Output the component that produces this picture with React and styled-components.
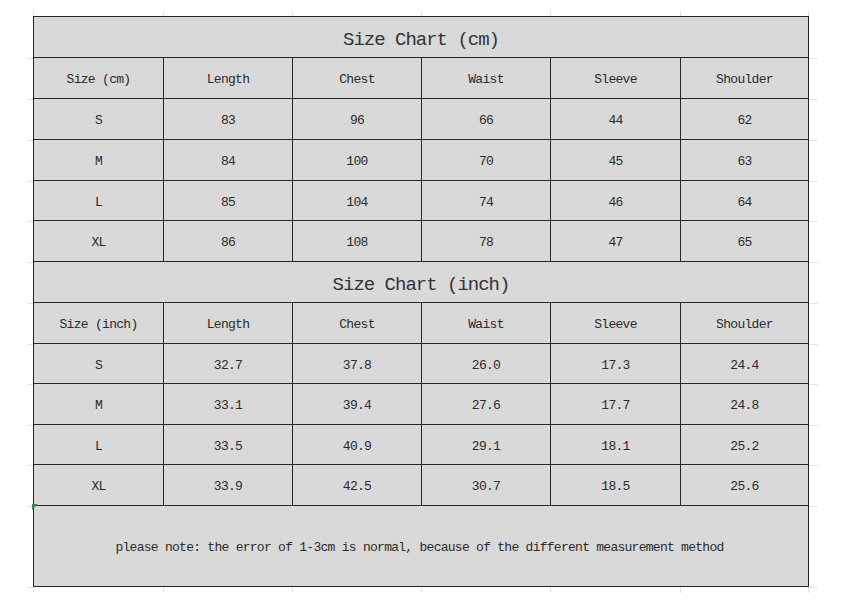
import React from "react";
import styled, { createGlobalStyle } from "styled-components";

const GlobalStyle = createGlobalStyle`
  html, body { margin: 0; padding: 0; background: #ffffff; }
  body { font-family: "Liberation Mono", "Courier New", monospace; }
`;

const COLS = "130px 129px 129px 129px 130px 128px";
const GRID_FAINT = "#e3e3e3";
const LINE = "#262626";

const Page = styled.div`
  width: 844px;
  height: 600px;
  box-sizing: border-box;
  padding: 11px 0 0 33px;
`;

const TickRow = styled.div`
  display: grid;
  grid-template-columns: ${COLS};
  width: 776px;
  height: ${(p) => p.$h}px;
  box-sizing: border-box;
  border-left: 1px solid ${GRID_FAINT};
`;

const Tick = styled.div`
  border-right: 1px solid ${GRID_FAINT};
`;

const Sheet = styled.div`
  width: 776px;
  box-sizing: border-box;
  border-left: 1px solid ${LINE};
  border-top: 1px solid ${LINE};
  background: #d9d9d9;
`;

const Row = styled.div`
  position: relative;
  display: grid;
  grid-template-columns: ${COLS};
  height: ${(p) => p.$h}px;

  &::before,
  &::after {
    content: "";
    position: absolute;
    bottom: -1px;
    height: 1px;
    background: ${GRID_FAINT};
  }
  &::before {
    left: -7px;
    width: 6px;
  }
  &::after {
    right: -9px;
    width: 9px;
  }
`;

const Cell = styled.div`
  position: relative;
  box-sizing: border-box;
  display: flex;
  align-items: center;
  justify-content: center;
  padding-top: 3px;
  border-right: 1px solid ${LINE};
  border-bottom: 1px solid ${LINE};
  color: #2b2b2b;
  font-size: 13px;
  letter-spacing: -0.7px;
  white-space: pre;
  grid-column: ${(p) => (p.$span ? `1 / span ${p.$span}` : "auto")};
`;

const TitleCell = styled(Cell)`
  font-size: 19px;
  letter-spacing: -1px;
  color: #333;
  padding-top: 5px;
`;

const NoteCell = styled(Cell)`
  padding-top: 2px;
  padding-right: 3px;
  letter-spacing: -0.73px;

  &::before {
    content: "";
    position: absolute;
    left: -2px;
    top: -2px;
    width: 0;
    height: 0;
    border-top: 6px solid #2f8f3c;
    border-right: 6px solid transparent;
  }
`;

const headers = ["Length", "Chest", "Waist", "Sleeve", "Shoulder"];

const cmRows = [
  ["S", "83", "96", "66", "44", "62"],
  ["M", "84", "100", "70", "45", "63"],
  ["L", "85", "104", "74", "46", "64"],
  ["XL", "86", "108", "78", "47", "65"],
];

const inchRows = [
  ["S", "32.7", "37.8", "26.0", "17.3", "24.4"],
  ["M", "33.1", "39.4", "27.6", "17.7", "24.8"],
  ["L", "33.5", "40.9", "29.1", "18.1", "25.2"],
  ["XL", "33.9", "42.5", "30.7", "18.5", "25.6"],
];

function Section({ title, unitLabel, rows, heights }) {
  return (
    <>
      <Row $h={heights[0]}>
        <TitleCell $span={6}>{title}</TitleCell>
      </Row>
      <Row $h={heights[1]}>
        <Cell>{unitLabel}</Cell>
        {headers.map((h) => (
          <Cell key={h}>{h}</Cell>
        ))}
      </Row>
      {rows.map((r, i) => (
        <Row key={r[0]} $h={heights[i + 2]}>
          {r.map((v, j) => (
            <Cell key={j}>{v}</Cell>
          ))}
        </Row>
      ))}
    </>
  );
}

export default function App() {
  return (
    <>
      <GlobalStyle />
      <Page>
        <TickRow $h={5}>
          {headers.concat([""]).map((_, i) => (
            <Tick key={i} />
          ))}
        </TickRow>
        <Sheet>
          <Section
            title="Size Chart (cm)"
            unitLabel="Size (cm)"
            rows={cmRows}
            heights={[41, 41, 41, 41, 40, 41]}
          />
          <Section
            title="Size Chart (inch)"
            unitLabel="Size (inch)"
            rows={inchRows}
            heights={[41, 41, 40, 41, 40, 41]}
          />
          <Row $h={81}>
            <NoteCell $span={6}>
              please note: the error of 1-3cm is normal, because of the different measurement method
            </NoteCell>
          </Row>
        </Sheet>
        <TickRow $h={6}>
          {headers.concat([""]).map((_, i) => (
            <Tick key={i} />
          ))}
        </TickRow>
      </Page>
    </>
  );
}
